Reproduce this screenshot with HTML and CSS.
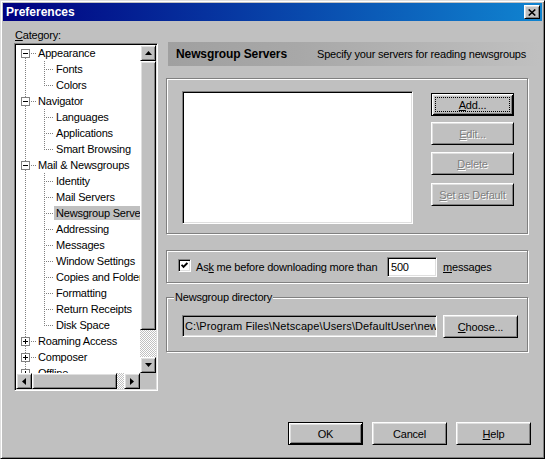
FILE: index.html
```html
<!DOCTYPE html>
<html>
<head>
<meta charset="utf-8">
<title>Preferences</title>
<link rel="stylesheet" href="styles.css">
</head>
<body>
<div class="window">
  <div class="titlebar">
    <span class="title">Preferences</span>
    <span class="close raised"><svg width="8" height="7" viewBox="0 0 8 7"><path d="M0.7 0.5L7.3 6.5M7.3 0.5L0.7 6.5" stroke="#000" stroke-width="1.6"/></svg></span>
  </div>
  <div class="body">
    <div class="main">
      <div class="left">
        <div class="cat-label"><u>C</u>ategory:</div>
        <div class="treebox sunken">
          <div class="tree-area">
            <div class="tree">
              <div class="trow top"><svg class="exp" width="9" height="9" viewBox="0 0 9 9"><rect x="0.5" y="0.5" width="8" height="8" fill="#fff" stroke="#808080"/><path d="M2 4.5h5" stroke="#000"/></svg><span class="hl"></span><span class="lbl">Appearance</span></div>
              <div class="kids">
                <div class="trow kid"><span class="lbl">Fonts</span></div>
                <div class="trow kid"><span class="lbl">Colors</span></div>
              </div>
              <div class="trow top"><svg class="exp" width="9" height="9" viewBox="0 0 9 9"><rect x="0.5" y="0.5" width="8" height="8" fill="#fff" stroke="#808080"/><path d="M2 4.5h5" stroke="#000"/></svg><span class="hl"></span><span class="lbl">Navigator</span></div>
              <div class="kids">
                <div class="trow kid"><span class="lbl">Languages</span></div>
                <div class="trow kid"><span class="lbl">Applications</span></div>
                <div class="trow kid"><span class="lbl">Smart Browsing</span></div>
              </div>
              <div class="trow top"><svg class="exp" width="9" height="9" viewBox="0 0 9 9"><rect x="0.5" y="0.5" width="8" height="8" fill="#fff" stroke="#808080"/><path d="M2 4.5h5" stroke="#000"/></svg><span class="hl"></span><span class="lbl">Mail &amp; Newsgroups</span></div>
              <div class="kids">
                <div class="trow kid"><span class="lbl">Identity</span></div>
                <div class="trow kid"><span class="lbl">Mail Servers</span></div>
                <div class="trow kid"><span class="lbl sel">Newsgroup Servers</span></div>
                <div class="trow kid"><span class="lbl">Addressing</span></div>
                <div class="trow kid"><span class="lbl">Messages</span></div>
                <div class="trow kid"><span class="lbl">Window Settings</span></div>
                <div class="trow kid"><span class="lbl">Copies and Folders</span></div>
                <div class="trow kid"><span class="lbl">Formatting</span></div>
                <div class="trow kid"><span class="lbl">Return Receipts</span></div>
                <div class="trow kid"><span class="lbl">Disk Space</span></div>
              </div>
              <div class="trow top"><svg class="exp" width="9" height="9" viewBox="0 0 9 9"><rect x="0.5" y="0.5" width="8" height="8" fill="#fff" stroke="#808080"/><path d="M2 4.5h5M4.5 2v5" stroke="#000"/></svg><span class="hl"></span><span class="lbl">Roaming Access</span></div>
              <div class="trow top"><svg class="exp" width="9" height="9" viewBox="0 0 9 9"><rect x="0.5" y="0.5" width="8" height="8" fill="#fff" stroke="#808080"/><path d="M2 4.5h5M4.5 2v5" stroke="#000"/></svg><span class="hl"></span><span class="lbl">Composer</span></div>
              <div class="trow top"><svg class="exp" width="9" height="9" viewBox="0 0 9 9"><rect x="0.5" y="0.5" width="8" height="8" fill="#fff" stroke="#808080"/><path d="M2 4.5h5M4.5 2v5" stroke="#000"/></svg><span class="hl"></span><span class="lbl">Offline</span></div>
            </div>
            <div class="vscroll">
              <div class="sbtn raised"><svg width="7" height="4" viewBox="0 0 7 4"><polygon points="3.5,0 7,4 0,4" fill="#000"/></svg></div>
              <div class="vthumb raised"></div>
              <div class="track"></div>
              <div class="sbtn raised"><svg width="7" height="4" viewBox="0 0 7 4"><polygon points="0,0 7,0 3.5,4" fill="#000"/></svg></div>
            </div>
          </div>
          <div class="hrow">
            <div class="hscroll">
              <div class="sbtn raised"><svg width="4" height="7" viewBox="0 0 4 7"><polygon points="0,3.5 4,0 4,7" fill="#000"/></svg></div>
              <div class="hthumb raised"></div>
              <div class="track"></div>
              <div class="sbtn raised"><svg width="4" height="7" viewBox="0 0 4 7"><polygon points="0,0 4,3.5 0,7" fill="#000"/></svg></div>
            </div>
            <div class="corner"></div>
          </div>
        </div>
      </div>
      <div class="right">
        <div class="band"><b class="band-title">Newsgroup Servers</b><span class="band-desc">Specify your servers for reading newsgroups</span></div>
        <div class="group g1">
          <div class="listbox sunken"></div>
          <div class="btncol">
            <div class="btn default b-add"><span class="focus"><u>A</u>dd...</span></div>
            <div class="btn raised disabled b-edit"><span><u>E</u>dit...</span></div>
            <div class="btn raised disabled b-del"><span><u>D</u>elete</span></div>
            <div class="btn raised disabled b-set"><span><u>S</u>et as Default</span></div>
          </div>
        </div>
        <div class="group g2">
          <span class="check sunken"><svg width="7" height="7" viewBox="0 0 7 7"><path d="M0.6 2.8L2.5 4.8L6.4 0.9" stroke="#000" stroke-width="1.9" fill="none"/></svg></span>
          <span class="asklabel">As<u>k</u> me before downloading more than</span>
          <span class="num sunken">500</span>
          <span class="msgs"><u>m</u>essages</span>
        </div>
        <div class="group g3">
          <div class="legend">Newsgroup directory</div>
          <div class="dirrow">
            <div class="path sunken">C:\Program Files\Netscape\Users\DefaultUser\news</div>
            <div class="btn raised b-choose"><span><u>C</u>hoose...</span></div>
          </div>
        </div>
      </div>
    </div>
    <div class="footer">
      <div class="btn default fbtn"><span>OK</span></div>
      <div class="btn raised fbtn"><span>Cancel</span></div>
      <div class="btn raised fbtn"><span><u>H</u>elp</span></div>
    </div>
  </div>
</div>
</body>
</html>
```

FILE: styles.css
```css
* { box-sizing: border-box; }
html, body { margin: 0; padding: 0; }
body {
  background: #c0c0c0;
  font-family: "Liberation Sans", Arial, sans-serif;
  font-size: 11px;
  letter-spacing: -0.2px;
  color: #000;
}
u { text-decoration: underline; text-underline-offset: 1px; }

.window {
  width: 545px;
  height: 459px;
  border: 1px solid;
  border-color: #dfdfdf #000 #000 #dfdfdf;
  box-shadow: inset 1px 1px #fff, inset -1px -1px #808080;
  padding: 2px;
  background: #c0c0c0;
  display: flex;
  flex-direction: column;
}

.titlebar {
  height: 18px;
  flex: none;
  display: flex;
  align-items: center;
  padding-left: 3px;
  background: linear-gradient(to right, #000080, #1084d0);
}
.title {
  color: #fff;
  font-weight: bold;
  font-size: 12px;
  letter-spacing: 0;
}
.close {
  margin-left: auto;
  margin-right: 2px;
  width: 16px;
  height: 14px;
  display: flex;
  align-items: center;
  justify-content: center;
}

.raised {
  background: #c0c0c0;
  border: 1px solid;
  border-color: #fff #000 #000 #fff;
  box-shadow: inset 1px 1px #dfdfdf, inset -1px -1px #808080;
}
.sunken {
  border: 1px solid;
  border-color: #808080 #fff #fff #808080;
  box-shadow: inset 1px 1px #000, inset -1px -1px #dfdfdf;
  padding: 1px;
}

.body {
  flex: 1;
  display: flex;
  flex-direction: column;
  padding: 6px 11px 0 11px;
}
.main {
  display: flex;
  gap: 8px;
  height: 364px;
}

/* left column */
.left {
  width: 144px;
  display: flex;
  flex-direction: column;
}
.cat-label {
  height: 16px;
  line-height: 16px;
  padding-left: 1px;
}
.treebox {
  height: 348px;
  display: flex;
  flex-direction: column;
}
.tree-area {
  display: flex;
  height: 328px;
}
.tree {
  flex: 1;
  overflow: hidden;
  background: #fff repeating-linear-gradient(to bottom, #808080 0 1px, transparent 1px 2px) 9px 13px / 1px 100% no-repeat;
}
.trow {
  height: 16px;
  display: flex;
  align-items: center;
  white-space: nowrap;
}
.exp { margin-left: 5px; flex: none; }
.hl {
  width: 5px;
  height: 1px;
  flex: none;
  margin-left: 1px;
  align-self: flex-start;
  margin-top: 8px;
  background: repeating-linear-gradient(to right, #808080 0 1px, transparent 1px 2px);
}
.lbl {
  padding: 0 2px;
  height: 14px;
  line-height: 14px;
}
.kids {
  background: repeating-linear-gradient(to bottom, #808080 0 1px, transparent 1px 2px) 28px 0 / 1px calc(100% - 8px) no-repeat;
}
.kid {
  padding-left: 38px;
  background: repeating-linear-gradient(to right, #808080 0 1px, transparent 1px 2px) 28px 8px / 9px 1px no-repeat;
}
.sel { background: #c0c0c0; }

.vscroll {
  width: 16px;
  display: flex;
  flex-direction: column;
}
.sbtn {
  width: 16px;
  height: 16px;
  flex: none;
  display: flex;
  align-items: center;
  justify-content: center;
}
.vthumb { height: 269px; flex: none; }
.track {
  flex: 1;
  background: repeating-conic-gradient(#fff 0 25%, #c0c0c0 0 50%) 0 0 / 2px 2px;
}
.hrow { display: flex; height: 16px; }
.hscroll { flex: 1; display: flex; }
.hthumb { width: 85px; flex: none; }
.corner { width: 16px; background: #c0c0c0; }

/* right column */
.right {
  width: 362px;
  display: flex;
  flex-direction: column;
}
.band {
  margin: 15px -12px 0 2px;
  height: 24px;
  flex: none;
  display: flex;
  align-items: center;
  background: linear-gradient(to right, #a0a0a0 0%, #a8a8a8 35%, #c0c0c0 100%);
}
.band-title {
  width: 149px;
  padding-left: 8px;
  font-size: 12px;
  letter-spacing: -0.1px;
  flex: none;
}
.band-desc { white-space: nowrap; }

.group {
  border: 1px solid #808080;
  box-shadow: inset 1px 1px #fff, 1px 1px #fff;
  flex: none;
}
.g1 {
  margin-top: 12px;
  height: 156px;
  display: flex;
  padding: 12px 0 0 15px;
}
.listbox {
  width: 231px;
  height: 133px;
  background: #fff;
}
.btncol {
  margin-left: 18px;
  display: flex;
  flex-direction: column;
}
.btn {
  display: flex;
  align-items: center;
  justify-content: center;
  white-space: nowrap;
  flex: none;
}
.btn.default {
  background: #c0c0c0;
  border: 1px solid #000;
  box-shadow: inset 1px 1px #fff, inset -1px -1px #000, inset 2px 2px #dfdfdf, inset -2px -2px #808080;
}
.btncol .btn { width: 83px; height: 23px; }
.b-add { margin-top: 2px; padding: 3px; }
.b-add .focus {
  flex: 1;
  align-self: stretch;
  border: 1px dotted #000;
  display: flex;
  align-items: center;
  justify-content: center;
}
.b-edit { margin-top: 6px; }
.b-del { margin-top: 7px; }
.b-set { margin-top: 8px; }
.disabled { color: #808080; text-shadow: 1px 1px 0 #fff; }

.g2 {
  margin-top: 16px;
  height: 33px;
  display: flex;
  align-items: center;
  padding-left: 11px;
}
.check {
  width: 13px;
  height: 13px;
  background: #fff;
  display: flex;
  align-items: center;
  justify-content: center;
  margin-top: -2px;
  flex: none;
}
.asklabel {
  margin-left: 5px;
  width: 191px;
  white-space: nowrap;
  flex: none;
}
.num {
  width: 50px;
  height: 20px;
  background: #fff;
  padding-left: 3px;
  line-height: 16px;
  flex: none;
}
.msgs { margin-left: 6px; }

.g3 {
  margin-top: 14px;
  height: 55px;
}
.legend {
  margin: -7px 0 0 7px;
  padding: 0 1px;
  width: max-content;
  line-height: 13px;
  background: #c0c0c0;
}
.dirrow {
  display: flex;
  margin-top: 11px;
  padding-left: 15px;
}
.path {
  width: 255px;
  height: 22px;
  background: #c0c0c0;
  white-space: nowrap;
  overflow: hidden;
  line-height: 18px;
  padding-left: 2px;
  letter-spacing: 0.1px;
}
.b-choose {
  margin-left: 6px;
  width: 75px;
  height: 23px;
}

.footer {
  display: flex;
  justify-content: flex-end;
  gap: 9px;
  margin-top: 31px;
}
.fbtn { width: 75px; height: 23px; }
```
